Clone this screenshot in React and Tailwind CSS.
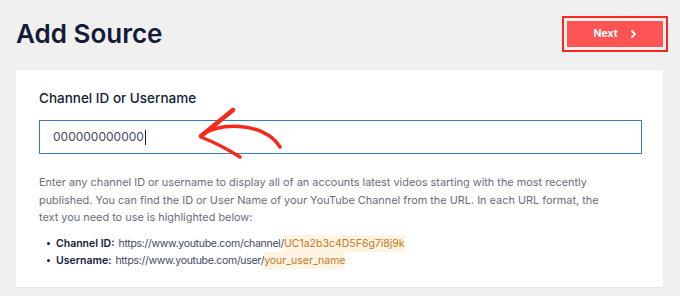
export default function App() {
  return (
    <div className="min-h-screen w-full bg-[#f0f0f0] pl-4 pr-[17px] pt-[21px] pb-[10px] font-['Inter',sans-serif]">
      <div className="flex items-center justify-between">
        <h1 className="text-[26px] leading-[30px] font-semibold text-[#141b38] -my-[2px]">Add Source</h1>
        <button className="flex h-[26px] w-[96px] items-center justify-center gap-[12px] bg-[#fe5453] text-[10.5px] font-bold text-white outline-2 outline-offset-[3px] outline-[#f7291c]">
          <span>Next</span>
          <svg width="7" height="10" viewBox="0 0 7 10" fill="none">
            <path d="M2 2 L5 5 L2 8" stroke="white" strokeWidth="1.8" strokeLinecap="round" strokeLinejoin="round" />
          </svg>
        </button>
      </div>

      <div className="relative mt-[23px] bg-white pl-[23px] pr-[21px] pt-[18px] pb-[18px] shadow-[0_1px_2px_rgba(0,0,0,0.06)]">
        <label className="block text-[13.5px] leading-[20px] font-medium text-[#141b38]">Channel ID or Username</label>
        <div className="mt-3 flex h-[34px] items-center border border-[#3a7cc0] pl-[13px] text-[12px] text-[#434960]">
          <span>000000000000</span>
          <span className="ml-px h-[15px] w-px bg-[#141b38]" />
        </div>

        <p className="mt-5 whitespace-nowrap text-[10.9px] leading-[17.5px] text-[#696d80]">
          Enter any channel ID or username to display all of an accounts latest videos starting with the most recently<br />
          published. You can find the ID or User Name of your YouTube Channel from the URL. In each URL format, the<br />
          text you need to use is highlighted below:
        </p>

        <ul className="mt-[8px] text-[10.5px] leading-[17px] text-[#434960]">
          <li className="flex items-center">
            <span className="ml-[8px] mr-[6px] h-[3px] w-[3px] rounded-full bg-[#141b38]" />
            <span className="font-semibold text-[#141b38]">Channel ID:</span>
            <span className="ml-1 tracking-[-0.3px]">https://www.youtube.com/channel/</span>
            <span className="bg-[#fff3e2] text-[#bf7a24]">UC1a2b3c4D5F6g7i8j9k</span>
          </li>
          <li className="flex items-center">
            <span className="ml-[8px] mr-[6px] h-[3px] w-[3px] rounded-full bg-[#141b38]" />
            <span className="font-semibold text-[#141b38]">Username:</span>
            <span className="ml-1 tracking-[-0.3px]">https://www.youtube.com/user/</span>
            <span className="bg-[#fff3e2] text-[#bf7a24]">your_user_name</span>
          </li>
        </ul>

        <svg className="pointer-events-none absolute left-0 top-0" width="647" height="216" viewBox="0 0 647 216" fill="none">
          <path d="M217 40 L185 66" stroke="#f8291b" strokeWidth="4.5" strokeLinecap="round" />
          <path d="M185 67 Q205 75 224 87" stroke="#f8291b" strokeWidth="3.5" strokeLinecap="round" />
          <path d="M185 66 C197 53 248 50 264 77" stroke="#f8291b" strokeWidth="3.5" strokeLinecap="round" />
        </svg>
      </div>
    </div>
  );
}
